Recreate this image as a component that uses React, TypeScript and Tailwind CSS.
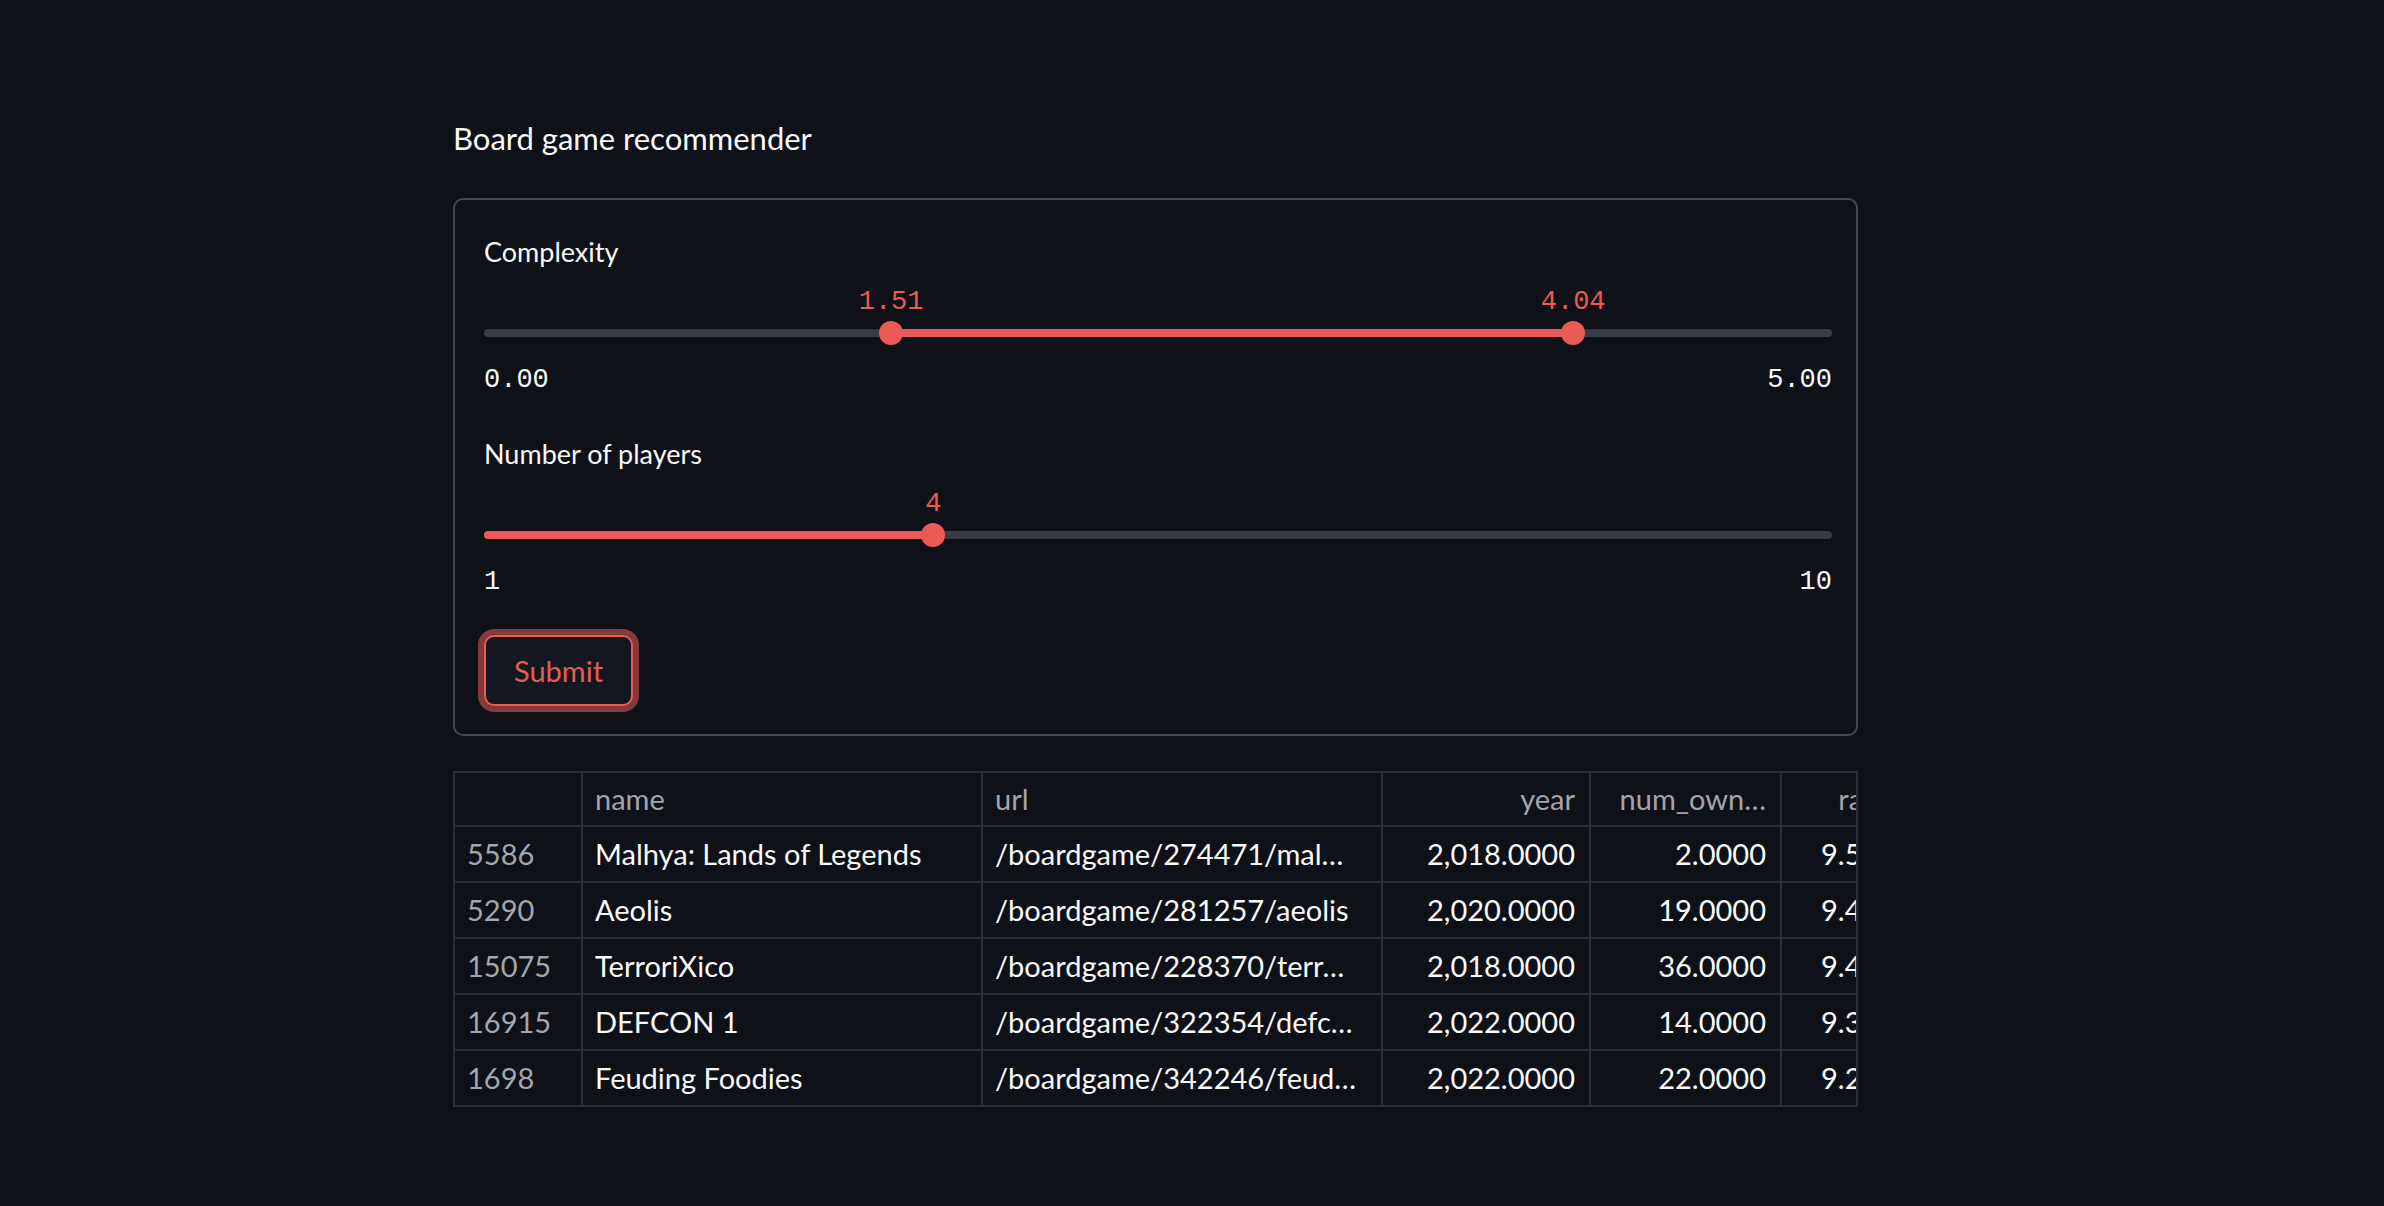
import React from "react";

type SliderProps = {
  min: number;
  max: number;
  values: number[];
  format: (v: number) => string;
};

function Slider({ min, max, values, format }: SliderProps) {
  const pct = (v: number) => ((v - min) / (max - min)) * 100;
  const from = values.length > 1 ? pct(values[0]) : 0;
  const to = pct(values[values.length - 1]);

  return (
    <div>
      <div className="relative h-[36px]">
        {values.map((v) => (
          <span
            key={v}
            className="absolute top-0 -translate-x-1/2 font-['Liberation_Mono',monospace] text-[27px] leading-[36px] text-[#eb5a54]"
            style={{ left: `${pct(v)}%` }}
          >
            {format(v)}
          </span>
        ))}
      </div>
      <div className="relative mt-[1px] h-[24px]">
        <div className="absolute left-0 right-0 top-[8px] h-[8px] rounded-full bg-[#393c45]" />
        <div
          className="absolute top-[8px] h-[8px] rounded-full bg-[#eb5a54]"
          style={{ left: `${from}%`, width: `${to - from}%` }}
        />
        {values.map((v) => (
          <div
            key={v}
            className="absolute top-0 h-[24px] w-[24px] -translate-x-1/2 rounded-full bg-[#eb5a54]"
            style={{ left: `${pct(v)}%` }}
          />
        ))}
      </div>
      <div className="mt-[17px] flex justify-between font-['Liberation_Mono',monospace] text-[27px] leading-[36px] text-[#fafafa]">
        <span>{format(min)}</span>
        <span>{format(max)}</span>
      </div>
    </div>
  );
}

const columns = [
  { key: "idx", label: "", w: "w-[128px]", right: false },
  { key: "name", label: "name", w: "w-[400px]", right: false },
  { key: "url", label: "url", w: "w-[400px]", right: false },
  { key: "year", label: "year", w: "w-[208px]", right: true },
  { key: "owned", label: "num_own…", w: "w-[191px]", right: true },
  { key: "rating", label: "rating", w: "w-[146px]", right: true },
];

const rows = [
  ["5586", "Malhya: Lands of Legends", "/boardgame/274471/mal…", "2,018.0000", "2.0000", "9.5000"],
  ["5290", "Aeolis", "/boardgame/281257/aeolis", "2,020.0000", "19.0000", "9.4211"],
  ["15075", "TerroriXico", "/boardgame/228370/terr…", "2,018.0000", "36.0000", "9.4028"],
  ["16915", "DEFCON 1", "/boardgame/322354/defc…", "2,022.0000", "14.0000", "9.3571"],
  ["1698", "Feuding Foodies", "/boardgame/342246/feud…", "2,022.0000", "22.0000", "9.2727"],
];

export default function App() {
  return (
    <div className="min-h-screen bg-[#0e1117] font-['Lato',sans-serif] text-[#fafafa]">
      <div className="ml-[453px] w-[1405px] pt-[118px]">
        <h1 className="text-[31px] leading-[40px] font-normal">Board game recommender</h1>

        <div className="mt-[40px] rounded-[10px] border-2 border-[#45474d] pl-[29px] pr-[24px] pt-[34px] pb-[28px]">
          <div className="text-[27px] leading-[36px]">Complexity</div>
          <div className="mt-[14px]">
            <Slider min={0} max={5} values={[1.51, 4.04]} format={(v) => v.toFixed(2)} />
          </div>

          <div className="mt-[38px] text-[27px] leading-[36px]">Number of players</div>
          <div className="mt-[14px]">
            <Slider min={1} max={10} values={[4]} format={(v) => String(v)} />
          </div>

          <button className="mt-[35px] flex h-[71px] w-[149px] items-center justify-center rounded-[10px] border-2 border-[#eb5a54] bg-[#131720] text-[29px] text-[#eb5a54] shadow-[0_0_0_6px_#86393a]">
            Submit
          </button>
        </div>

        <div className="mt-[35px] overflow-hidden border-2 border-[#2b2d34]">
          <div className="flex h-[54px] w-max border-b-2 border-[#2b2d34]">
            {columns.map((c) => (
              <div
                key={c.key}
                className={`${c.w} flex shrink-0 items-center overflow-hidden whitespace-nowrap border-r-2 border-[#2b2d34] pl-[12px] pr-[14px] text-[29px] text-[#a3a5ab] ${c.right ? "justify-end" : ""}`}
              >
                {c.label}
              </div>
            ))}
          </div>
          {rows.map((r, i) => (
            <div
              key={r[0]}
              className={`flex w-max ${i < rows.length - 1 ? "h-[56px] border-b-2 border-[#2b2d34]" : "h-[54px]"}`}
            >
              {columns.map((c, j) => (
                <div
                  key={c.key}
                  className={`${c.w} flex shrink-0 items-center overflow-hidden whitespace-nowrap border-r-2 border-[#2b2d34] pl-[12px] pr-[14px] text-[29px] ${j === 0 ? "text-[#a3a5ab]" : "text-[#fafafa]"} ${c.right ? "justify-end" : ""}`}
                >
                  {r[j]}
                </div>
              ))}
            </div>
          ))}
        </div>
      </div>
    </div>
  );
}
